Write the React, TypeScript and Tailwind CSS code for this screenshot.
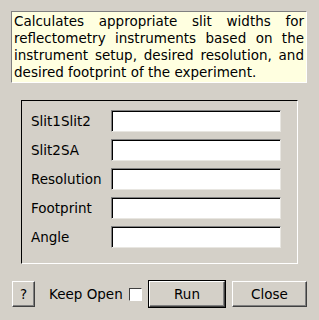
const fields = ['Slit1Slit2', 'Slit2SA', 'Resolution', 'Footprint', 'Angle'];

const raised = 'border border-t-white border-l-white border-r-[#404040] border-b-[#404040] shadow-[inset_-1px_-1px_0_#808080]';

const App = () => {
  return (
    <div className="w-[319px] h-[320px] bg-[#d4d0c8] text-[13.5px] text-black overflow-hidden" style={{ fontFamily: '"DejaVu Sans", sans-serif' }}>
      <div className="ml-[11px] pt-[11px]">
        <div className="w-[296px] h-[72px] bg-[#ffffe0] border border-t-[#808080] border-l-[#808080] border-r-white border-b-white pl-[2px] pr-[2px] pt-[1px] leading-[17px] text-justify">
          Calculates appropriate slit widths for reflectometry instruments based on the instrument setup, desired resolution, and desired footprint of the experiment.
        </div>
      </div>

      <div className="ml-[21px] mt-[17px] w-[277px] h-[164px] border border-t-black border-l-black border-r-white border-b-white pt-[9px] pl-[9px] flex flex-col gap-[7px]">
        {fields.map((f) => (
          <div key={f} className="flex items-center h-[22px]">
            <span className="w-[80px] leading-[22px]">{f}</span>
            <input
              type="text"
              className="w-[170px] h-[22px] bg-white border border-t-[#808080] border-l-[#808080] border-r-[#e8e6e1] border-b-[#e8e6e1] shadow-[inset_1px_1px_0_#000] outline-none px-1"
            />
          </div>
        ))}
      </div>

      <div className="flex items-center mt-[16px] h-[28px]">
        <button className={`ml-[12px] w-[23px] h-[26px] ${raised} flex items-center justify-center`}>?</button>
        <span className="ml-[14px] w-[74px] whitespace-nowrap">Keep Open</span>
        <span className="ml-[6px] w-[13px] h-[13px] bg-white border border-t-[#404040] border-l-[#404040] border-r-white border-b-white" />
        <button className="ml-[6px] w-[78px] h-[28px] border border-black flex">
          <span className={`flex-1 flex items-center justify-center ${raised}`}>Run</span>
        </button>
        <button className={`ml-[6px] w-[75px] h-[26px] ${raised} flex items-center justify-center`}>Close</button>
      </div>
    </div>
  );
};

export default App;
